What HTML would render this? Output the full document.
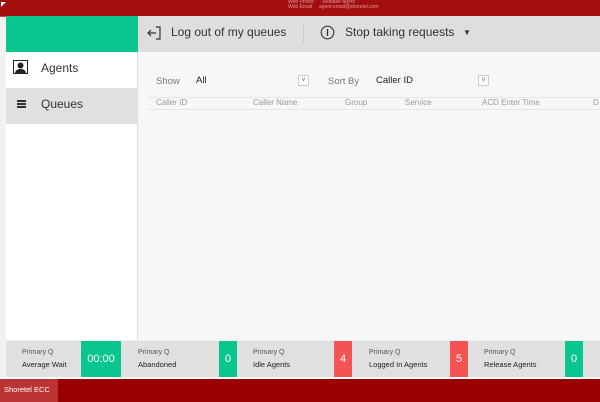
<!DOCTYPE html>
<html><head><style>
*{margin:0;padding:0;box-sizing:border-box}
body{width:600px;height:402px;overflow:hidden;background:#f2f2f2;font-family:"Liberation Sans","DejaVu Sans",sans-serif;position:relative}
.a{position:absolute}
.lbl{font-size:7px;color:#555}
.big{font-size:7.5px;color:#222}
.num{color:#fff;font-size:11px;display:flex;align-items:center;justify-content:center}
</style></head><body>
<div class="a" style="left:0;top:0;width:600px;height:17px;background:#a30f0f;border-bottom:1px solid #c44"></div>
<div class="a" style="left:1px;top:2px;width:0;height:0;border-top:5px solid #fff;border-right:5px solid transparent"></div>
<div class="a" style="left:288px;top:0;font-size:5px;color:#d99;line-height:5px">Web Phone &nbsp;&nbsp;&nbsp;&nbsp; Release Agent<br>Web Email &nbsp;&nbsp;&nbsp; agent.email@shoretel.com</div>
<div class="a" style="left:6px;top:16px;width:132px;height:36px;background:#08c68e"></div>
<div class="a" style="left:138px;top:16px;width:462px;height:36px;background:#dedede"></div>
<div class="a" style="left:303px;top:24px;width:1px;height:20px;background:#ccc"></div>
<svg class="a" style="left:147px;top:25px" width="16" height="16" viewBox="0 0 16 16"><path d="M9 2h4v12H9" fill="none" stroke="#333" stroke-width="1.2"/><path d="M1 8h8M4 5L1 8l3 3" fill="none" stroke="#333" stroke-width="1.2"/></svg>
<div class="a" style="left:171px;top:25px;font-size:12px;color:#333">Log out of my queues</div>
<svg class="a" style="left:320px;top:25px" width="15" height="15" viewBox="0 0 15 15"><circle cx="7.5" cy="7.5" r="6.3" fill="none" stroke="#333" stroke-width="1.1"/><path d="M7.5 4v7" stroke="#333" stroke-width="1.3"/></svg>
<div class="a" style="left:345px;top:25px;font-size:12px;color:#333">Stop taking requests</div>
<div class="a" style="left:463px;top:28px;font-size:8px;color:#333">▼</div>
<div class="a" style="left:6px;top:52px;width:132px;height:288px;background:#fff;border-right:1px solid #ddd"></div>
<div class="a" style="left:6px;top:88px;width:132px;height:36px;background:#e0e0e0"></div>
<svg class="a" style="left:13px;top:60px" width="15" height="14" viewBox="0 0 15 14"><rect x="0.5" y="0.5" width="14" height="13" fill="#fff" stroke="#222"/><circle cx="7.5" cy="5.5" r="3" fill="#222"/><path d="M2 14c0-4 3-5 5.5-5s5.5 1 5.5 5z" fill="#222"/></svg>
<div class="a" style="left:41px;top:61px;font-size:12px;color:#333">Agents</div>
<div class="a" style="left:17px;top:100px;width:9px;height:8px;border-top:2px solid #333;border-bottom:2px solid #333"><div style="margin-top:1px;height:2px;background:#333"></div></div>
<div class="a" style="left:41px;top:97px;font-size:12px;color:#333">Queues</div>
<div class="a" style="left:139px;top:52px;width:461px;height:288px;background:#f7f7f7"></div>
<div class="a" style="left:156px;top:76px;font-size:9.5px;color:#777">Show</div>
<div class="a" style="left:196px;top:75px;font-size:9.5px;color:#222">All</div>
<div class="a" style="left:298px;top:75px;width:11px;height:11px;border:1px solid #ccc;background:#fff;font-size:6px;text-align:center;line-height:9px;color:#555">v</div>
<div class="a" style="left:328px;top:76px;font-size:9.5px;color:#777">Sort By</div>
<div class="a" style="left:376px;top:75px;font-size:9.5px;color:#222">Caller ID</div>
<div class="a" style="left:478px;top:75px;width:11px;height:11px;border:1px solid #ccc;background:#fff;font-size:6px;text-align:center;line-height:9px;color:#555">v</div>
<div class="a" style="left:148px;top:97px;width:452px;height:13px;border-top:1px solid #e6e6e6;border-bottom:1px solid #e6e6e6"></div>
<div class="a" style="top:98px;font-size:8px;color:#999;left:156px">Caller ID</div>
<div class="a" style="top:98px;font-size:8px;color:#999;left:253px">Caller Name</div>
<div class="a" style="top:98px;font-size:8px;color:#999;left:345px">Group</div>
<div class="a" style="top:98px;font-size:8px;color:#999;left:405px">Service</div>
<div class="a" style="top:98px;font-size:8px;color:#999;left:482px">ACD Enter Time</div>
<div class="a" style="top:98px;font-size:8px;color:#999;left:593px">D</div>
<div class="a" style="left:6px;top:341px;width:594px;height:36px;background:#e0e0e0"></div>
<div class="a" style="left:0;top:377px;width:600px;height:2px;background:#fff"></div>
<div class="a" style="left:0;top:379px;width:600px;height:23px;background:#9a0000"></div>
<div class="a" style="left:0;top:379px;width:58px;height:23px;background:#b33;color:#fff;font-size:7.5px;line-height:22px;padding-left:4px">Shoretel ECC</div>
<div class="a lbl" style="left:22px;top:349px">Primary Q</div><div class="a big" style="left:22px;top:360px">Average Wait</div>
<div class="a num" style="left:81px;top:341px;width:40px;height:36px;background:#08c68e">00:00</div>
<div class="a lbl" style="left:138px;top:349px">Primary Q</div><div class="a big" style="left:138px;top:360px">Abandoned</div>
<div class="a num" style="left:219px;top:341px;width:18px;height:36px;background:#08c68e">0</div>
<div class="a lbl" style="left:253px;top:349px">Primary Q</div><div class="a big" style="left:253px;top:360px">Idle Agents</div>
<div class="a num" style="left:334px;top:341px;width:18px;height:36px;background:#f55353">4</div>
<div class="a lbl" style="left:369px;top:349px">Primary Q</div><div class="a big" style="left:369px;top:360px">Logged In Agents</div>
<div class="a num" style="left:450px;top:341px;width:18px;height:36px;background:#f55353">5</div>
<div class="a lbl" style="left:484px;top:349px">Primary Q</div><div class="a big" style="left:484px;top:360px">Release Agents</div>
<div class="a num" style="left:565px;top:341px;width:18px;height:36px;background:#08c68e">0</div>
</body></html>
